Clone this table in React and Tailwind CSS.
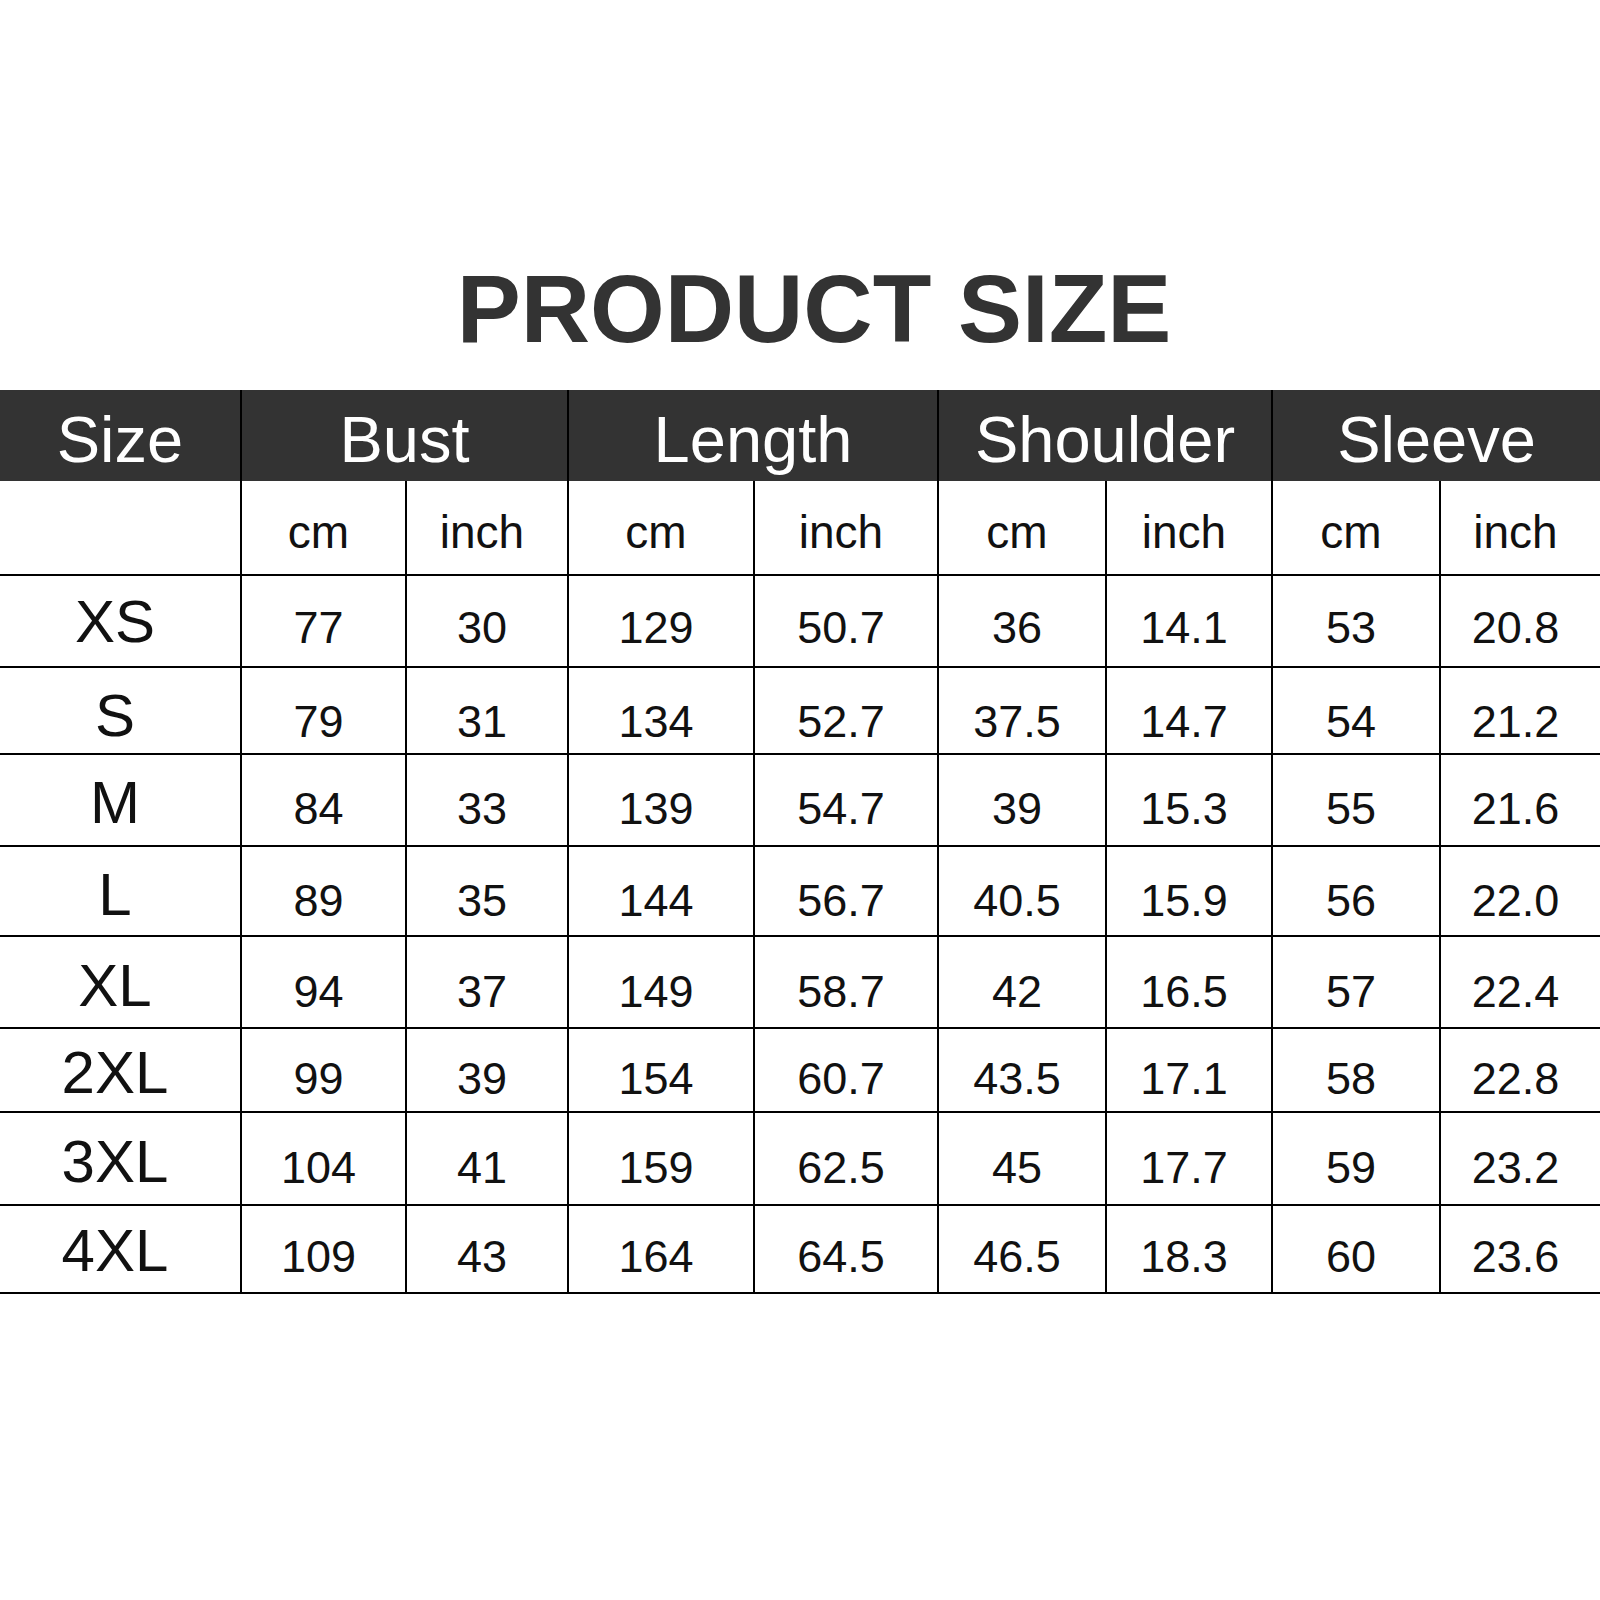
import React from "react";

const cols = "grid grid-cols-[240px_165px_162px_186px_184px_168px_166px_168px_161px]";

const groups = [
  { name: "Bust", w: "w-[327px]" },
  { name: "Length", w: "w-[370px]" },
  { name: "Shoulder", w: "w-[334px]" },
  { name: "Sleeve", w: "w-[329px]" },
];

// h = row height incl. bottom line, num/lab = bottom padding so baselines line up
const rows = [
  { size: "XS", h: "h-[92px]", num: "pb-[16px]", lab: "pb-[14px]", v: ["77", "30", "129", "50.7", "36", "14.1", "53", "20.8"] },
  { size: "S", h: "h-[87px]", num: "pb-[9px]", lab: "pb-[7px]", v: ["79", "31", "134", "52.7", "37.5", "14.7", "54", "21.2"] },
  { size: "M", h: "h-[92px]", num: "pb-[14px]", lab: "pb-[12px]", v: ["84", "33", "139", "54.7", "39", "15.3", "55", "21.6"] },
  { size: "L", h: "h-[90px]", num: "pb-[12px]", lab: "pb-[10px]", v: ["89", "35", "144", "56.7", "40.5", "15.9", "56", "22.0"] },
  { size: "XL", h: "h-[92px]", num: "pb-[13px]", lab: "pb-[11px]", v: ["94", "37", "149", "58.7", "42", "16.5", "57", "22.4"] },
  { size: "2XL", h: "h-[84px]", num: "pb-[10px]", lab: "pb-[8px]", v: ["99", "39", "154", "60.7", "43.5", "17.1", "58", "22.8"] },
  { size: "3XL", h: "h-[93px]", num: "pb-[14px]", lab: "pb-[12px]", v: ["104", "41", "159", "62.5", "45", "17.7", "59", "23.2"] },
  { size: "4XL", h: "h-[88px]", num: "pb-[13px]", lab: "pb-[11px]", v: ["109", "43", "164", "64.5", "46.5", "18.3", "60", "23.6"] },
];

const units = ["cm", "inch", "cm", "inch", "cm", "inch", "cm", "inch"];

const App = () => {
  return (
    <div className="w-[1600px] min-h-[1600px] bg-white font-['Liberation_Sans',Arial,sans-serif] pt-[261px]">
      <h1 className="text-[96px] leading-none font-bold text-[#333333] text-center pl-[28px]">
        PRODUCT SIZE
      </h1>

      {/* table */}
      <div className="mt-[33px] w-[1600px]">
        {/* group header */}
        <div className="flex h-[91px] bg-[#333333] text-white text-[65px] leading-none">
          <div className="w-[240px] flex items-end justify-center pb-[9px]">Size</div>
          {groups.map((g) => (
            <div
              key={g.name}
              className={`${g.w} border-l-2 border-black flex items-end justify-center pb-[9px]`}
            >
              {g.name}
            </div>
          ))}
        </div>

        {/* units */}
        <div className={`${cols} h-[95px] border-b-2 border-black text-[#111111] text-[46px] leading-none`}>
          <div></div>
          {units.map((u, i) => (
            <div key={i} className="border-l-2 border-black flex items-end justify-center pb-[19px] pr-[10px]">
              {u}
            </div>
          ))}
        </div>

        {rows.map((r) => (
          <div key={r.size} className={`${cols} ${r.h} border-b-2 border-black text-[#111111] leading-none`}>
            <div className={`flex items-end justify-center text-[60px] pr-[10px] ${r.lab}`}>{r.size}</div>
            {r.v.map((val, i) => (
              <div
                key={i}
                className={`border-l-2 border-black flex items-end justify-center text-[45px] pr-[10px] ${r.num}`}
              >
                {val}
              </div>
            ))}
          </div>
        ))}
      </div>
    </div>
  );
};

export default App;
